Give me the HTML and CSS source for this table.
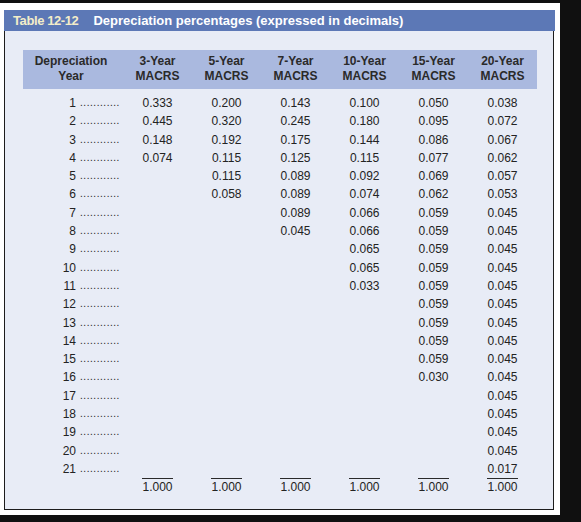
FILE: index.html
```html
<!DOCTYPE html>
<html>
<head>
<meta charset="utf-8">
<link rel="stylesheet" href="styles.css">
</head>
<body>
<div class="frame">
  <div class="titlebar"><span class="label">Table 12-12</span><span class="title">Depreciation percentages (expressed in decimals)</span></div>
  <div class="panel">
    <div class="thead">
      <div class="th first">Depreciation<br>Year</div>
      <div class="th">3-Year<br>MACRS</div>
      <div class="th">5-Year<br>MACRS</div>
      <div class="th">7-Year<br>MACRS</div>
      <div class="th">10-Year<br>MACRS</div>
      <div class="th">15-Year<br>MACRS</div>
      <div class="th">20-Year<br>MACRS</div>
    </div>
    <div class="tbody" id="tbody">
      <div class="row"><div class="yr"><span class="n">1</span><span class="dots">............</span></div><div>0.333</div><div>0.200</div><div>0.143</div><div>0.100</div><div>0.050</div><div>0.038</div></div>
      <div class="row"><div class="yr"><span class="n">2</span><span class="dots">............</span></div><div>0.445</div><div>0.320</div><div>0.245</div><div>0.180</div><div>0.095</div><div>0.072</div></div>
      <div class="row"><div class="yr"><span class="n">3</span><span class="dots">............</span></div><div>0.148</div><div>0.192</div><div>0.175</div><div>0.144</div><div>0.086</div><div>0.067</div></div>
      <div class="row"><div class="yr"><span class="n">4</span><span class="dots">............</span></div><div>0.074</div><div>0.115</div><div>0.125</div><div>0.115</div><div>0.077</div><div>0.062</div></div>
      <div class="row"><div class="yr"><span class="n">5</span><span class="dots">............</span></div><div></div><div>0.115</div><div>0.089</div><div>0.092</div><div>0.069</div><div>0.057</div></div>
      <div class="row"><div class="yr"><span class="n">6</span><span class="dots">............</span></div><div></div><div>0.058</div><div>0.089</div><div>0.074</div><div>0.062</div><div>0.053</div></div>
      <div class="row"><div class="yr"><span class="n">7</span><span class="dots">............</span></div><div></div><div></div><div>0.089</div><div>0.066</div><div>0.059</div><div>0.045</div></div>
      <div class="row"><div class="yr"><span class="n">8</span><span class="dots">............</span></div><div></div><div></div><div>0.045</div><div>0.066</div><div>0.059</div><div>0.045</div></div>
      <div class="row"><div class="yr"><span class="n">9</span><span class="dots">............</span></div><div></div><div></div><div></div><div>0.065</div><div>0.059</div><div>0.045</div></div>
      <div class="row"><div class="yr"><span class="n">10</span><span class="dots">............</span></div><div></div><div></div><div></div><div>0.065</div><div>0.059</div><div>0.045</div></div>
      <div class="row"><div class="yr"><span class="n">11</span><span class="dots">............</span></div><div></div><div></div><div></div><div>0.033</div><div>0.059</div><div>0.045</div></div>
      <div class="row"><div class="yr"><span class="n">12</span><span class="dots">............</span></div><div></div><div></div><div></div><div></div><div>0.059</div><div>0.045</div></div>
      <div class="row"><div class="yr"><span class="n">13</span><span class="dots">............</span></div><div></div><div></div><div></div><div></div><div>0.059</div><div>0.045</div></div>
      <div class="row"><div class="yr"><span class="n">14</span><span class="dots">............</span></div><div></div><div></div><div></div><div></div><div>0.059</div><div>0.045</div></div>
      <div class="row"><div class="yr"><span class="n">15</span><span class="dots">............</span></div><div></div><div></div><div></div><div></div><div>0.059</div><div>0.045</div></div>
      <div class="row"><div class="yr"><span class="n">16</span><span class="dots">............</span></div><div></div><div></div><div></div><div></div><div>0.030</div><div>0.045</div></div>
      <div class="row"><div class="yr"><span class="n">17</span><span class="dots">............</span></div><div></div><div></div><div></div><div></div><div></div><div>0.045</div></div>
      <div class="row"><div class="yr"><span class="n">18</span><span class="dots">............</span></div><div></div><div></div><div></div><div></div><div></div><div>0.045</div></div>
      <div class="row"><div class="yr"><span class="n">19</span><span class="dots">............</span></div><div></div><div></div><div></div><div></div><div></div><div>0.045</div></div>
      <div class="row"><div class="yr"><span class="n">20</span><span class="dots">............</span></div><div></div><div></div><div></div><div></div><div></div><div>0.045</div></div>
      <div class="row"><div class="yr"><span class="n">21</span><span class="dots">............</span></div><div></div><div></div><div></div><div></div><div></div><div>0.017</div></div>
      <div class="row total"><div></div><div><span class="sum">1.000</span></div><div><span class="sum">1.000</span></div><div><span class="sum">1.000</span></div><div><span class="sum">1.000</span></div><div><span class="sum">1.000</span></div><div><span class="sum">1.000</span></div></div>
    </div>
  </div>
</div>
</body>
</html>
```

FILE: styles.css
```css
html, body {
  margin: 0;
  padding: 0;
}
body {
  background: #101010;
  font-family: "Liberation Sans", Arial, sans-serif;
  width: 581px;
  height: 522px;
  overflow: hidden;
}
.frame {
  margin-top: 3px;
  width: 560px;
  height: 512px;
  box-sizing: border-box;
  padding: 7px 0 0 4px;
  background: #ffffff;
}
.titlebar {
  width: 551px;
  height: 21px;
  background: #5c78b6;
  display: flex;
  align-items: center;
  padding-left: 9px;
  box-sizing: border-box;
  font-weight: bold;
  font-size: 13px;
  line-height: 21px;
}
.label {
  color: #f3edc9;
  letter-spacing: -0.4px;
  margin-right: 15px;
}
.title {
  color: #ffffff;
}
.panel {
  width: 550px;
  height: 479px;
  box-sizing: border-box;
  background: #e8ecf6;
  border: 1px solid #1c1c1c;
  border-top: none;
  padding: 19px 0 0 18px;
  color: #232323;
}
.thead, .row {
  display: grid;
  grid-template-columns: 100px repeat(6, 69px);
  width: 514px;
}
.thead {
  background: #aab9df;
  padding: 4px 0 5px;
  font-weight: bold;
  font-size: 12px;
  line-height: 15px;
  color: #2a2a2a;
}
.th {
  text-align: center;
}
.th.first {
  padding-right: 4px;
}
.tbody {
  padding-top: 5px;
}
.row {
  height: 18.3px;
  font-size: 12px;
  line-height: 18.3px;
  text-align: center;
}
.yr {
  display: flex;
  text-align: left;
}
.yr .n {
  width: 53px;
  text-align: right;
}
.yr .dots {
  margin-left: 4px;
  font-size: 10px;
  letter-spacing: 0.55px;
}
.total {
  height: 18px;
}
.sum {
  display: inline-block;
  border-top: 1px solid #2a2a2a;
  line-height: 16px;
}
```
